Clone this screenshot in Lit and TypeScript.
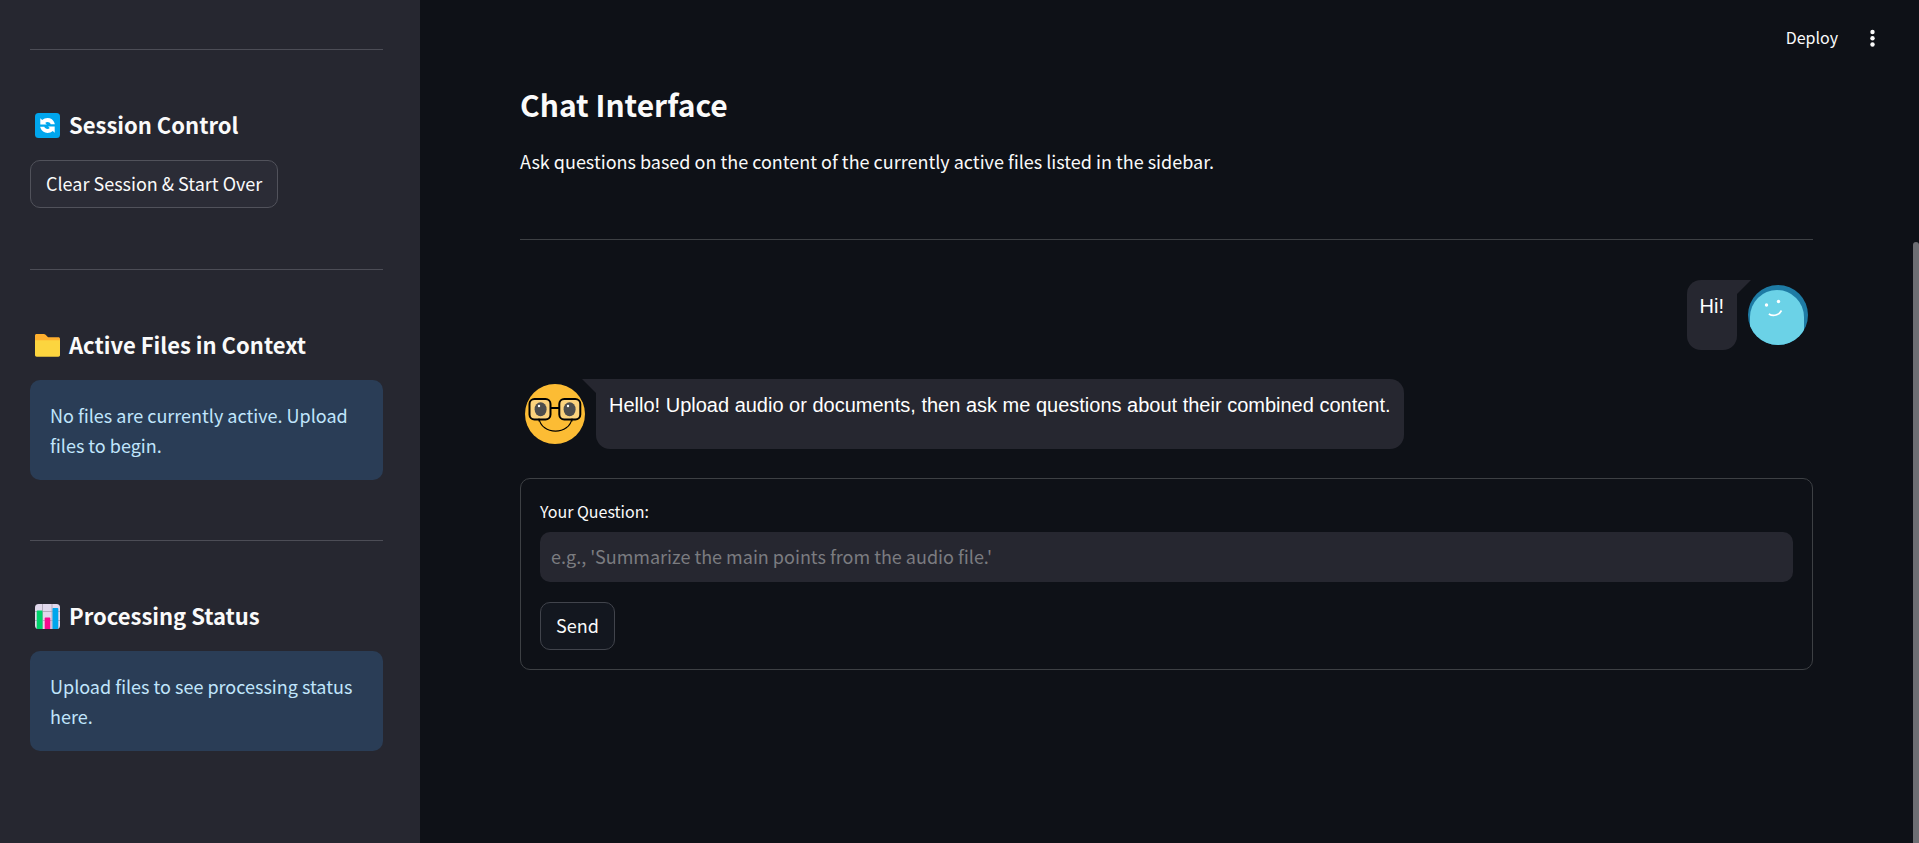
import { LitElement, html, css, svg } from "lit";
import { customElement, property, state } from "lit/decorators.js";

const sans = css`"Source Sans Pro", "Noto Sans CJK SC", "Noto Sans", sans-serif`;

const refreshIcon = svg`
  <rect x="0" y="0" width="25" height="25" rx="3.5" fill="#00a6ed"></rect>
  <path d="M5.3 5.3 7.2 7C8.6 5.7 10.5 5 12.5 5c3.300 0 6 2 7 4.900l.3 1.300h-4.100c-.5-1.300-1.700-2.100-3.200-2.100-.9 0-1.700.3-2.300.9l1.700 1.600H5.300z" fill="#fff"></path>
  <path d="M19.700 19.700 17.800 18c-1.400 1.300-3.300 2-5.300 2-3.300 0-6-2-7-4.900l-.3-1.300h4.100c.5 1.300 1.700 2.100 3.200 2.100.9 0 1.700-.3 2.300-.9l-1.700-1.600h6.600z" fill="#fff"></path>`;

const folderIcon = svg`
  <path d="M0 2.500C0 1.500.8 1 1.500 1h7.200c.8 0 1.400.3 1.900.8l2.200 2.100c.3.300.7.400 1.100.4h9.400c1 0 1.700.7 1.700 1.600V12H0z" fill="#ffb02e"></path>
  <path d="M0 7.200h25v14.900c0 1-.7 1.700-1.700 1.700H1.700c-1 0-1.700-.7-1.700-1.700z" fill="#fcd53f"></path>`;

const chartIcon = svg`
  <rect x="0" y="0" width="25" height="25" rx="3.5" fill="#e1d8ec"></rect>
  <path d="M7.500 0v25M17 0v25M0 7.500h25M0 16.500h25" stroke="#b4acbc" stroke-width="1"></path>
  <path d="M1.700 7.500c0-.6.400-1 1-1h3.800c.6 0 1 .4 1 1V25H2.700c-.6 0-1-.4-1-1z" fill="#00d26a"></path>
  <path d="M9.700 14.600c0-.6.400-1 1-1h3.600c.6 0 1 .4 1 1V25H9.700z" fill="#f70a8d"></path>
  <path d="M17.500 5c0-.6.400-1 1-1h3.800c.6 0 1 .4 1 1v19c0 .6-.4 1-1 1h-4.800z" fill="#00a6ed"></path>`;

@customElement("side-section")
class SideSection extends LitElement {
  @property() heading = "";
  @property({ attribute: false }) icon: unknown = null;

  static styles = css`
    :host { display: block; border-top: 1px solid #4c4d56; padding: 60px 0; }
    h3 {
      display: flex; align-items: center; gap: 9px; margin: 0 0 20px; padding-left: 5px;
      font: 700 22px/28px ${sans}; min-height: 30px; color: #fafafa;
    }
    svg { width: 25px; height: 25px; flex: none; }
    .label { padding-bottom: 2px; }
  `;

  render() {
    return html`
      <h3>
        <svg viewBox="0 0 25 25" aria-hidden="true">${this.icon}</svg>
        <span class="label">${this.heading}</span>
      </h3>
      <slot></slot>
    `;
  }
}

@customElement("chat-message")
class ChatMessage extends LitElement {
  @property() from: "user" | "bot" = "bot";
  @property() text = "";

  static styles = css`
    :host { display: block; }
    .row { display: flex; align-items: flex-start; gap: 11px; padding: 0 5px; }
    .user { flex-direction: row-reverse; }
    .avatar { width: 60px; height: 60px; margin-top: 5px; flex: none; }
    .bubble {
      position: relative; box-sizing: border-box; min-height: 70px; margin: 0; padding: 12px 13px;
      background: #262730; color: #fff; border-radius: 14px;
      font: 20px/28px "Liberation Sans", Arial, sans-serif;
    }
    .bubble::before {
      content: ""; position: absolute; top: 0; width: 28px; height: 14px; background: #262730;
    }
    .bot .bubble { border-top-left-radius: 0; }
    .bot .bubble::before { left: -14px; clip-path: polygon(0 0, 100% 0, 100% 100%, 50% 100%); }
    .user .bubble { border-top-right-radius: 0; }
    .user .bubble::before { right: -14px; clip-path: polygon(0 0, 100% 0, 50% 100%, 0 100%); }
  `;

  private userFace() {
    return svg`
      <clipPath id="disc"><circle cx="30" cy="30" r="30"></circle></clipPath>
      <g clip-path="url(#disc)">
        <rect width="60" height="60" fill="#1e7ba4"></rect>
        <path d="M2 60V32a27 27 0 0 1 54 0v28z" fill="#6bd2e7"></path>
      </g>
      <circle cx="18.5" cy="20" r="1.700" fill="#fff"></circle>
      <circle cx="30.5" cy="16.500" r="1.700" fill="#fff"></circle>
      <path d="M20.800 29c4.700 2.800 10.200 1.200 12.700-3.500" fill="none" stroke="#fff" stroke-width="1.600"></path>`;
  }

  private botFace() {
    return svg`
      <circle cx="30" cy="30" r="30" fill="#fcbc34"></circle>
      <path d="M14 34c2 17.500 31 17.500 33 0" fill="none" stroke="#000" stroke-width="1.200"></path>
      <g fill="#fbd27d" stroke="#000" stroke-width="2">
        <rect x="4.500" y="15" width="21" height="20.500" rx="5"></rect>
        <rect x="34.300" y="15" width="21" height="20.500" rx="5"></rect>
      </g>
      <path d="M26 24h8" stroke="#000" stroke-width="2"></path>
      <ellipse cx="15.600" cy="25.200" rx="6" ry="7" fill="#4d4d4d"></ellipse>
      <ellipse cx="44.600" cy="25.200" rx="6" ry="7" fill="#4d4d4d"></ellipse>
      <circle cx="14" cy="22" r="1.200" fill="#fff"></circle>
      <circle cx="43" cy="22" r="1.200" fill="#fff"></circle>
      <path d="M14 34.500v3M47 34.500v3" stroke="#000" stroke-width="1"></path>`;
  }

  render() {
    return html`
      <div class="row ${this.from}">
        <svg class="avatar" viewBox="0 0 60 60" role="img" aria-label=${this.from}>
          ${this.from === "user" ? this.userFace() : this.botFace()}
        </svg>
        <p class="bubble">${this.text}</p>
      </div>
    `;
  }
}

@customElement("app-root")
class AppRoot extends LitElement {
  @state() private messages = [
    { from: "user", text: "Hi!" },
    { from: "bot", text: "Hello! Upload audio or documents, then ask me questions about their combined content." },
  ];

  static styles = css`
    :host {
      display: flex; min-height: 100vh; background: #0e1117; color: #fafafa;
      font: 18px/30px ${sans};
    }
    aside { box-sizing: border-box; width: 420px; flex: none; padding: 49px 37px 0 30px; background: #262730; }
    .notice { margin: 0; padding: 20px; border-radius: 10px; background: #2a3d56; color: #c0e5fc; }
    button { font: inherit; color: inherit; cursor: pointer; }
    .button {
      display: block; box-sizing: border-box; height: 48px; padding: 0 15px 2px;
      border: 1px solid #41444c; border-radius: 10px; background: #13171f;
    }
    aside .button { margin-bottom: 61px; background: #2b2c36; border-color: #51525b; }
    aside side-section:first-child { padding-bottom: 0; }
    .page { flex: 1; min-width: 0; padding: 20px 0 100px; }
    header { display: flex; justify-content: flex-end; align-items: center; gap: 24px; height: 36px; padding-right: 31px; }
    .plain { display: flex; align-items: center; padding: 0; border: 0; background: none; font-size: 16px; }
    .deploy { padding-bottom: 2px; }
    .dots { width: 20px; height: 20px; fill: #fafafa; }
    main { padding: 0 100px; }
    h2 { margin: 27px 0 0; font: 700 30px/42px ${sans}; }
    .lead { margin: 21px 0 0; }
    hr { margin: 63px 0 40px; border: 0; border-top: 1px solid #3d4044; }
    .log { display: flex; flex-direction: column; gap: 29px; }
    form {
      display: flex; flex-direction: column; align-items: flex-start;
      margin-top: 29px; padding: 19px; border: 1px solid #3d4044; border-radius: 10px;
    }
    label { font-size: 16px; line-height: 26px; margin-bottom: 8px; }
    input {
      box-sizing: border-box; width: 100%; height: 50px; margin-bottom: 20px; padding: 0 11px 2px;
      border: 0; border-radius: 10px; background: #262730; color: #fafafa; font: inherit;
    }
    input::placeholder { color: #7b7c80; opacity: 1; }
    .track { display: flex; flex: none; width: 6px; padding-top: 242px; }
    .thumb { flex: 1; border-radius: 3px 3px 0 0; background: #6d6e73; }
  `;

  render() {
    return html`
      <aside>
        <side-section heading="Session Control" .icon=${refreshIcon}>
          <button class="button" type="button">Clear Session &amp; Start Over</button>
        </side-section>
        <side-section heading="Active Files in Context" .icon=${folderIcon}>
          <p class="notice">No files are currently active. Upload files to begin.</p>
        </side-section>
        <side-section heading="Processing Status" .icon=${chartIcon}>
          <p class="notice">Upload files to see processing status here.</p>
        </side-section>
      </aside>
      <div class="page">
        <header>
          <button class="plain deploy" type="button">Deploy</button>
          <button class="plain" type="button" aria-label="Main menu">
            <svg class="dots" viewBox="0 0 20 20" aria-hidden="true">
              <circle cx="10.500" cy="4" r="2.200"></circle>
              <circle cx="10.500" cy="10.300" r="2.200"></circle>
              <circle cx="10.500" cy="16.500" r="2.200"></circle>
            </svg>
          </button>
        </header>
        <main>
          <h2>Chat Interface</h2>
          <p class="lead">Ask questions based on the content of the currently active files listed in the sidebar.</p>
          <hr>
          <div class="log">
            ${this.messages.map((m) => html`<chat-message from=${m.from} text=${m.text}></chat-message>`)}
          </div>
          <form @submit=${(e: Event) => e.preventDefault()}>
            <label for="question">Your Question:</label>
            <input id="question" type="text" placeholder="e.g., 'Summarize the main points from the audio file.'">
            <button class="button" type="submit">Send</button>
          </form>
        </main>
      </div>
      <div class="track" aria-hidden="true"><div class="thumb"></div></div>
    `;
  }
}
